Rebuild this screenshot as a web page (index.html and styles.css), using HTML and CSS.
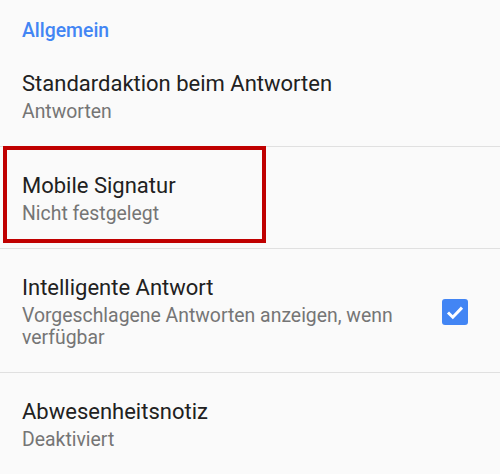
FILE: index.html
```html
<!DOCTYPE html>
<html>
<head>
	<title>Einstellungen</title>
	<link rel="stylesheet" href="styles.css">
</head>
<body>
	<div class="settings">
		<div class="section-title">Allgemein</div>

		<div class="item">
			<div class="item-text">
				<div class="item-title">Standardaktion beim Antworten</div>
				<div class="item-sub">Antworten</div>
			</div>
		</div>

		<div class="item marked">
			<div class="item-text">
				<div class="item-title">Mobile Signatur</div>
				<div class="item-sub">Nicht festgelegt</div>
			</div>
			<div class="highlight"></div>
		</div>

		<div class="item">
			<div class="item-text">
				<div class="item-title">Intelligente Antwort</div>
				<div class="item-sub">Vorgeschlagene Antworten anzeigen, wenn verfügbar</div>
			</div>
			<div class="checkbox">
				<svg width="26" height="26" viewBox="0 0 26 26">
					<rect x="0" y="0" width="26" height="26" rx="3" fill="#4285f4"/>
					<path d="M6 13.5 L10.8 18.2 L20 8.6" fill="none" stroke="#fff" stroke-width="3"/>
				</svg>
			</div>
		</div>

		<div class="item last">
			<div class="item-text">
				<div class="item-title">Abwesenheitsnotiz</div>
				<div class="item-sub">Deaktiviert</div>
			</div>
		</div>
	</div>
</body>
</html>
```

FILE: styles.css
```css
body {
	margin: 0;
	font-family: Roboto, "Noto Sans", sans-serif;
	background-color: #fafafa;
}
.settings {
	width: 500px;
}
.section-title {
	padding: 19px 22px 2px;
	font-size: 19.4px;
	line-height: 24px;
	font-weight: 500;
	color: #4285f4;
}
.item {
	position: relative;
	display: flex;
	align-items: center;
	padding: 25px 32px 23px 22px;
	border-bottom: 1px solid #e0e0e0;
}
.item.last {
	border-bottom: none;
}
.item-text {
	flex: 1;
	padding-right: 20px;
}
.item-title {
	font-size: 22px;
	line-height: 28px;
	color: #212121;
}
.item-sub {
	margin-top: 3px;
	font-size: 19.4px;
	line-height: 22px;
	color: #757575;
}
.checkbox {
	width: 26px;
	height: 26px;
	flex: none;
}
.checkbox svg {
	display: block;
}
.highlight {
	position: absolute;
	left: 3px;
	top: -1px;
	width: 255px;
	height: 89px;
	border: 4px solid #c00000;
}
```
